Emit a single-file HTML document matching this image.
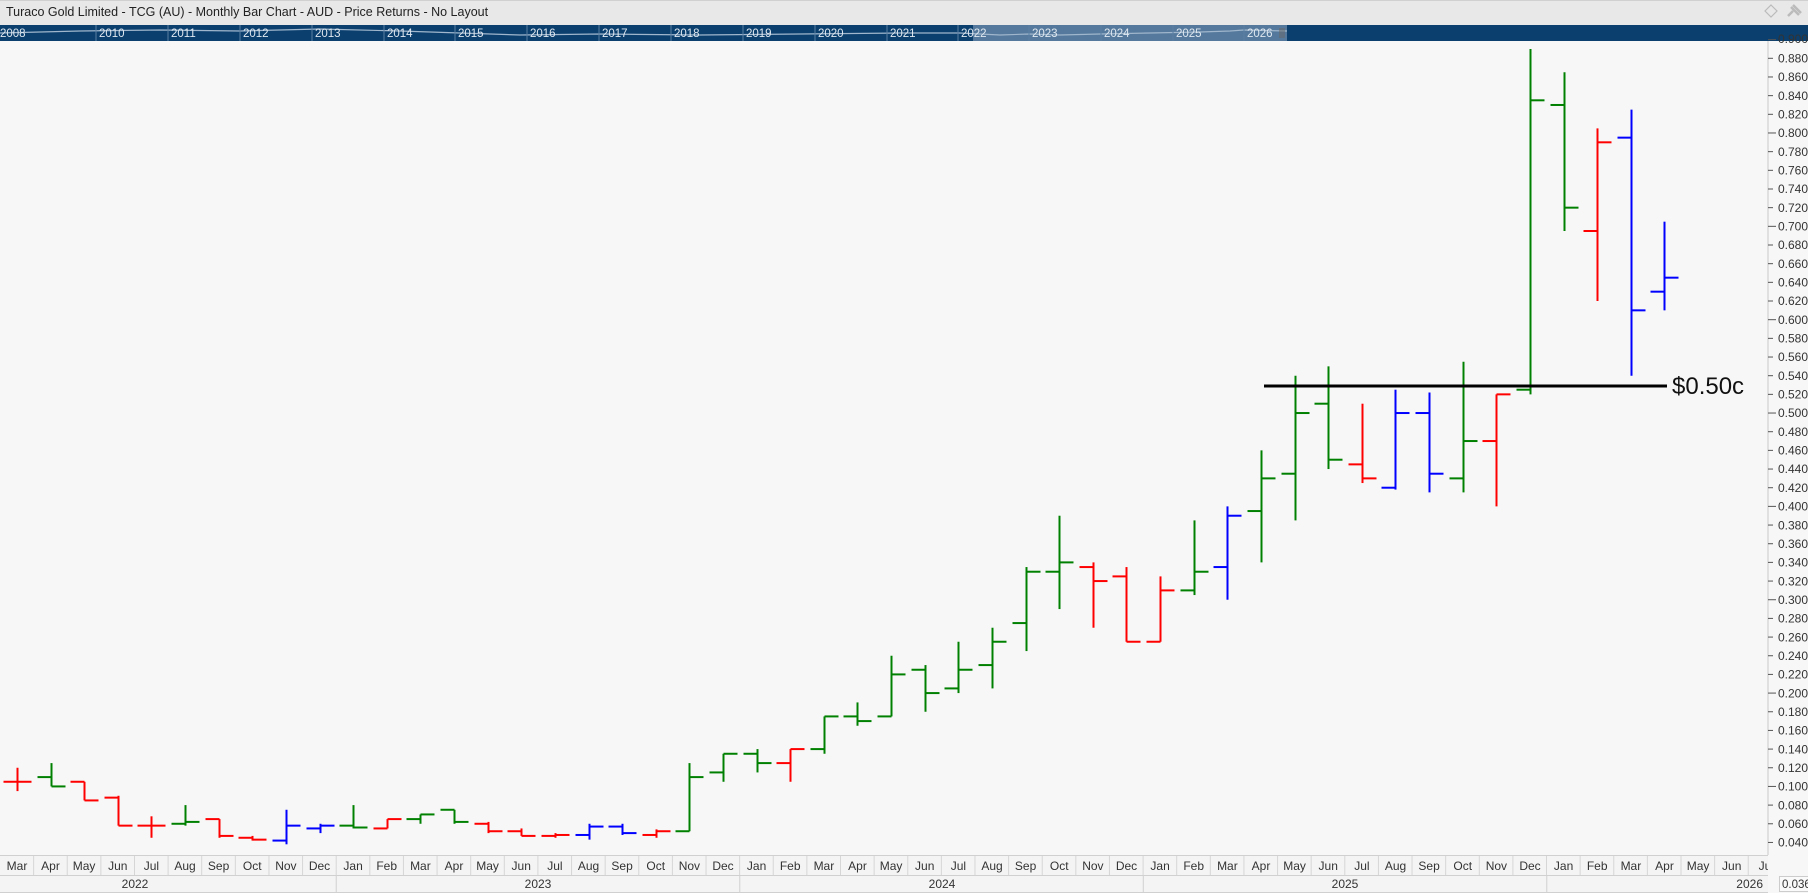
<!DOCTYPE html>
<html><head><meta charset="utf-8">
<style>
html,body{margin:0;padding:0;width:1808px;height:893px;overflow:hidden;background:#f7f7f7;font-family:"Liberation Sans",sans-serif;}
#title{position:absolute;left:0;top:0;width:1808px;height:25px;background:#e8e8e8;border-top:1px solid #d0d0d0;box-sizing:border-box;font-size:12.5px;color:#222;line-height:23px;padding-left:6px;}
svg{position:absolute;left:0;top:0;}
</style></head><body>
<div id="title">Turaco Gold Limited - TCG (AU) - Monthly Bar Chart - AUD - Price Returns - No Layout</div>
<svg width="1808" height="893" xmlns="http://www.w3.org/2000/svg" font-family="Liberation Sans, sans-serif">
<!-- icons -->
<path d="M1771 5 L1777 11 L1771 17 L1765 11 Z" fill="none" stroke="#bbb" stroke-width="1.2"/>
<path d="M1788 16 L1793 11 M1791 7 L1799 15 M1793 5 L1801 13 L1797 9" stroke="#bbb" stroke-width="2.5" fill="none"/>
<!-- nav band -->
<rect x="0" y="25" width="1808" height="16" fill="#0b3f6e"/>
<rect x="973" y="25" width="314" height="16" fill="#55799c"/>
<polyline points="0,33 80,31 160,30 240,31 320,29 400,31 460,33 520,35 600,34 700,35 800,34 900,33 960,33 1000,35 1029,34 1060,35 1100,34 1150,33 1200,32 1230,31 1244,30 1287,31" fill="none" stroke="#9fb6cc" stroke-width="1.2"/>
<g stroke="#5a7fa3" stroke-width="1">
<line x1="96" y1="25" x2="96" y2="41"/><line x1="168" y1="25" x2="168" y2="41"/><line x1="240" y1="25" x2="240" y2="41"/><line x1="312" y1="25" x2="312" y2="41"/><line x1="384" y1="25" x2="384" y2="41"/><line x1="455" y1="25" x2="455" y2="41"/><line x1="527" y1="25" x2="527" y2="41"/><line x1="599" y1="25" x2="599" y2="41"/><line x1="671" y1="25" x2="671" y2="41"/><line x1="743" y1="25" x2="743" y2="41"/><line x1="815" y1="25" x2="815" y2="41"/><line x1="887" y1="25" x2="887" y2="41"/><line x1="958" y1="25" x2="958" y2="41"/><line x1="1029" y1="25" x2="1029" y2="41"/><line x1="1101" y1="25" x2="1101" y2="41"/><line x1="1173" y1="25" x2="1173" y2="41"/><line x1="1244" y1="25" x2="1244" y2="41"/>
</g>
<g fill="#dfe8f0" font-size="11.5">
<text x="0" y="37">2008</text><text x="99" y="37">2010</text><text x="171" y="37">2011</text><text x="243" y="37">2012</text><text x="315" y="37">2013</text><text x="387" y="37">2014</text><text x="458" y="37">2015</text><text x="530" y="37">2016</text><text x="602" y="37">2017</text><text x="674" y="37">2018</text><text x="746" y="37">2019</text><text x="818" y="37">2020</text><text x="890" y="37">2021</text><text x="961" y="37">2022</text><text x="1032" y="37">2023</text><text x="1104" y="37">2024</text><text x="1176" y="37">2025</text><text x="1247" y="37">2026</text>
</g>
<g stroke="#666" stroke-width="1"><line x1="1280" y1="28" x2="1280" y2="38"/><line x1="1282" y1="28" x2="1282" y2="38"/><line x1="1284" y1="28" x2="1284" y2="38"/></g>
<!-- y axis -->
<line x1="1768" y1="41" x2="1768" y2="856" stroke="#c8c8c8"/>
<g id="yt" font-size="12" fill="#333">
<text x="1778" y="43">0.900</text>
<text x="1778" y="62.5">0.880</text><text x="1778" y="81.2">0.860</text><text x="1778" y="99.8">0.840</text><text x="1778" y="118.5">0.820</text><text x="1778" y="137.2">0.800</text><text x="1778" y="155.8">0.780</text><text x="1778" y="174.5">0.760</text><text x="1778" y="193.2">0.740</text><text x="1778" y="211.9">0.720</text><text x="1778" y="230.5">0.700</text><text x="1778" y="249.2">0.680</text><text x="1778" y="267.9">0.660</text><text x="1778" y="286.5">0.640</text><text x="1778" y="305.2">0.620</text><text x="1778" y="323.9">0.600</text><text x="1778" y="342.6">0.580</text><text x="1778" y="361.2">0.560</text><text x="1778" y="379.9">0.540</text><text x="1778" y="398.6">0.520</text><text x="1778" y="417.2">0.500</text><text x="1778" y="435.9">0.480</text><text x="1778" y="454.6">0.460</text><text x="1778" y="473.2">0.440</text><text x="1778" y="491.9">0.420</text><text x="1778" y="510.6">0.400</text><text x="1778" y="529.3">0.380</text><text x="1778" y="547.9">0.360</text><text x="1778" y="566.6">0.340</text><text x="1778" y="585.3">0.320</text><text x="1778" y="603.9">0.300</text><text x="1778" y="622.6">0.280</text><text x="1778" y="641.3">0.260</text><text x="1778" y="659.9">0.240</text><text x="1778" y="678.6">0.220</text><text x="1778" y="697.3">0.200</text><text x="1778" y="716.0">0.180</text><text x="1778" y="734.6">0.160</text><text x="1778" y="753.3">0.140</text><text x="1778" y="772.0">0.120</text><text x="1778" y="790.6">0.100</text><text x="1778" y="809.3">0.080</text><text x="1778" y="828.0">0.060</text><text x="1778" y="846.6">0.040</text>
</g>
<g id="ticks" stroke="#555" stroke-width="1"></g>
<rect x="0" y="41" width="1766" height="1" fill="none"/>
<g id="bars" stroke-width="2" fill="none"></g>
<!-- resistance line -->
<line x1="1264" y1="386" x2="1667" y2="386" stroke="#000" stroke-width="3"/>
<text x="1672" y="394" font-size="24" fill="#111">$0.50c</text>
<!-- bottom axis -->
<rect x="0" y="855" width="1768" height="38" fill="#f4f4f4"/>
<line x1="0" y1="855.5" x2="1768" y2="855.5" stroke="#d0d0d0"/>
<line x1="0" y1="875.5" x2="1768" y2="875.5" stroke="#d0d0d0"/>
<line x1="0" y1="892.5" x2="1768" y2="892.5" stroke="#d0d0d0"/>
<g id="mlines" stroke="#d6d6d6"></g>
<g font-size="12" fill="#333" text-anchor="middle">
<text x="17" y="870">Mar</text><text x="50.5" y="870">Apr</text><text x="84.1" y="870">May</text><text x="117.8" y="870">Jun</text><text x="151.4" y="870">Jul</text><text x="185" y="870">Aug</text><text x="218.6" y="870">Sep</text><text x="252.2" y="870">Oct</text><text x="285.9" y="870">Nov</text><text x="319.5" y="870">Dec</text>
<text x="353.1" y="870">Jan</text><text x="386.7" y="870">Feb</text><text x="420.4" y="870">Mar</text><text x="454" y="870">Apr</text><text x="487.6" y="870">May</text><text x="521.2" y="870">Jun</text><text x="554.9" y="870">Jul</text><text x="588.5" y="870">Aug</text><text x="622.1" y="870">Sep</text><text x="655.7" y="870">Oct</text><text x="689.4" y="870">Nov</text><text x="723" y="870">Dec</text>
<text x="756.6" y="870">Jan</text><text x="790.2" y="870">Feb</text><text x="823.9" y="870">Mar</text><text x="857.5" y="870">Apr</text><text x="891.1" y="870">May</text><text x="924.7" y="870">Jun</text><text x="958.4" y="870">Jul</text><text x="992" y="870">Aug</text><text x="1025.6" y="870">Sep</text><text x="1059.2" y="870">Oct</text><text x="1092.9" y="870">Nov</text><text x="1126.5" y="870">Dec</text>
<text x="1160.1" y="870">Jan</text><text x="1193.7" y="870">Feb</text><text x="1227.4" y="870">Mar</text><text x="1261" y="870">Apr</text><text x="1294.6" y="870">May</text><text x="1328.2" y="870">Jun</text><text x="1361.9" y="870">Jul</text><text x="1395.5" y="870">Aug</text><text x="1429.1" y="870">Sep</text><text x="1462.7" y="870">Oct</text><text x="1496.4" y="870">Nov</text><text x="1530" y="870">Dec</text>
<text x="1563.6" y="870">Jan</text><text x="1597.2" y="870">Feb</text><text x="1630.9" y="870">Mar</text><text x="1664.5" y="870">Apr</text><text x="1698.1" y="870">May</text><text x="1731.7" y="870">Jun</text><text x="1765" y="870">Ju</text>
<text x="135" y="888">2022</text><text x="538" y="888">2023</text><text x="942" y="888">2024</text><text x="1345" y="888">2025</text>
</g>
<rect x="1768" y="855" width="40" height="38" fill="#f7f7f7"/>
<g stroke="#d0d0d0"><line x1="336.2" y1="876" x2="336.2" y2="892"/><line x1="739.8" y1="876" x2="739.8" y2="892"/><line x1="1143.3" y1="876" x2="1143.3" y2="892"/><line x1="1546.8" y1="876" x2="1546.8" y2="892"/></g>
<text x="1763" y="888" font-size="12" fill="#333" text-anchor="end">2026</text>
<rect x="1779.5" y="876.5" width="30" height="15" fill="#fafafa" stroke="#ccc"/>
<text x="1782" y="888" font-size="11.5" fill="#333">0.036</text>
</svg>
<script>
var ns="http://www.w3.org/2000/svg";
function Y(p){return 58.3+(0.88-p)*933.5;}
function L(g,x1,y1,x2,y2,c){var l=document.createElementNS(ns,"line");l.setAttribute("x1",x1);l.setAttribute("y1",y1);l.setAttribute("x2",x2);l.setAttribute("y2",y2);if(c)l.setAttribute("stroke",c);g.appendChild(l);}
var t=document.getElementById("ticks");
for(var k=0;k<=43;k++){var p=0.90-k*0.02;var y=Y(p);L(t,1768,y,k%5==0?1776:1773,y);}
var m=document.getElementById("mlines");
for(var i=1;i<53;i++){var x=i*33.62;L(m,x,856,x,875);}
var G="#008000",R="#ff0000",B="#0000ff";
var d=[[R,.12,.095,.105,.105],[G,.125,.10,.11,.10],[R,.105,.085,.105,.085],[R,.09,.058,.088,.058],[R,.068,.045,.058,.058],[G,.08,.058,.06,.062],[R,.065,.045,.065,.047],[R,.047,.042,.045,.043],[B,.075,.038,.042,.058],[B,.06,.05,.055,.058],
[G,.08,.055,.058,.056],[R,.065,.055,.055,.065],[G,.07,.06,.065,.07],[G,.075,.06,.075,.062],[R,.062,.05,.06,.052],[R,.055,.047,.052,.047],[R,.05,.045,.047,.048],[B,.06,.043,.048,.057],[B,.06,.048,.057,.05],[R,.054,.045,.048,.052],
[G,.125,.052,.052,.11],[G,.135,.105,.115,.135],[G,.14,.115,.135,.125],[R,.14,.105,.125,.14],[G,.175,.135,.14,.175],[G,.19,.165,.175,.17],[G,.24,.175,.175,.22],[G,.23,.18,.225,.2],[G,.255,.2,.205,.225],[G,.27,.205,.23,.255],
[G,.335,.245,.275,.33],[G,.39,.29,.33,.34],[R,.34,.27,.335,.32],[R,.335,.255,.325,.255],[R,.325,.255,.255,.31],[G,.385,.305,.31,.33],[B,.4,.3,.335,.39],[G,.46,.34,.395,.43],[G,.54,.385,.435,.5],[G,.55,.44,.51,.45],
[R,.51,.425,.445,.43],[B,.525,.418,.42,.50],[B,.522,.415,.50,.435],[G,.555,.415,.43,.47],[R,.52,.40,.47,.52],[G,.89,.52,.525,.835],[G,.865,.695,.83,.72],[R,.805,.62,.695,.79],[B,.825,.54,.795,.61],[B,.705,.61,.63,.645]];
var g=document.getElementById("bars");
d.forEach(function(b,i){var x=Math.round(17+i*33.62)+0.5;var c=b[0];
L(g,x,Math.max(41,Y(b[1])),x,Y(b[2]),c);L(g,x-14,Y(b[3]),x,Y(b[3]),c);L(g,x,Y(b[4]),x+14,Y(b[4]),c);});
</script>
</body></html>
